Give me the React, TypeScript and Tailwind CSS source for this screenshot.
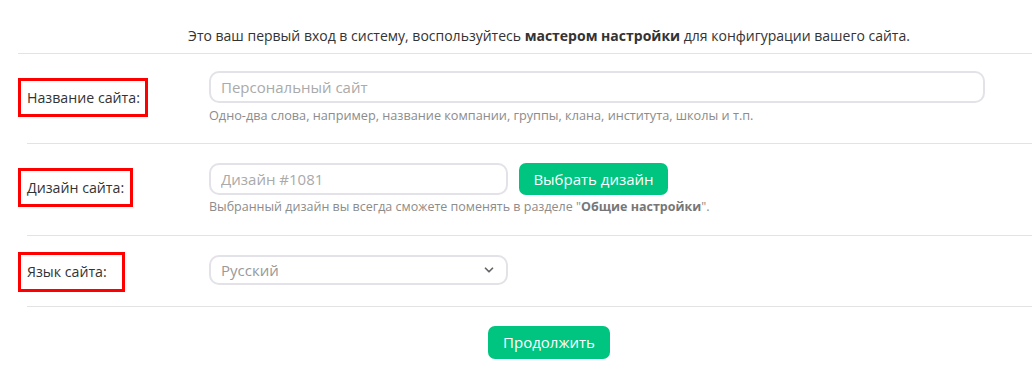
import { ChevronDown } from 'lucide-react';

export default function App() {
  return (
    <div className="w-[1032px] h-[375px] overflow-hidden bg-white font-['Open_Sans',sans-serif] text-[#333]">
      <div className="ml-[18px] w-[1062px]">
        {/* intro */}
        <div className="h-[53px] pt-[26px] text-center text-[14px] leading-5">
          Это ваш первый вход в систему, воспользуйтесь <b className="font-bold">мастером настройки</b> для конфигурации вашего сайта.
        </div>
        <div className="h-px bg-[#e3e3e6]" />

        {/* site name */}
        <div className="h-[89px] flex">
          <div className="w-[191px] pt-[24px]">
            <span className="block w-[130px] border-[3px] border-[#ff0000] pl-[6px] h-[39px] leading-[33px] text-[14.2px] whitespace-nowrap">
              Название сайта:
            </span>
          </div>
          <div className="pt-[17px]">
            <input
              placeholder="Персональный сайт"
              className="w-[776px] h-[32px] border-2 border-[#e2e2e8] rounded-[10px] px-[10px] text-[15px] outline-none placeholder:text-[#aaa]"
            />
            <div className="mt-[4px] text-[12.7px] leading-4 text-[#8c8c8c]">
              Одно-два слова, например, название компании, группы, клана, института, школы и т.п.
            </div>
          </div>
        </div>
        <div className="ml-[9px] h-px bg-[#e3e3e6]" />

        {/* design */}
        <div className="h-[91px] flex">
          <div className="w-[191px] pt-[24px]">
            <span className="block w-[115px] border-[3px] border-[#ff0000] pl-[6px] h-[39px] leading-[33px] text-[14.2px] whitespace-nowrap">
              Дизайн сайта:
            </span>
          </div>
          <div className="pt-[19px]">
            <div className="flex gap-[11px]">
              <input
                placeholder="Дизайн #1081"
                className="w-[299px] h-[32px] border-2 border-[#e2e2e8] rounded-[10px] px-[10px] text-[15px] outline-none placeholder:text-[#aaa]"
              />
              <button className="w-[149px] h-[32px] rounded-[7px] bg-[#00c580] text-white text-[15px]">
                Выбрать дизайн
              </button>
            </div>
            <div className="mt-[4px] text-[12.5px] leading-4 text-[#8c8c8c]">
              Выбранный дизайн вы всегда сможете поменять в разделе "<b className="font-bold text-[#777]">Общие настройки</b>".
            </div>
          </div>
        </div>
        <div className="ml-[9px] h-px bg-[#e3e3e6]" />

        {/* language */}
        <div className="h-[70px] flex">
          <div className="w-[191px] pt-[16px]">
            <span className="block w-[107px] border-[3px] border-[#ff0000] pl-[6px] h-[40px] leading-[34px] text-[14.2px] whitespace-nowrap">
              Язык сайта:
            </span>
          </div>
          <div className="pt-[19px]">
            <div className="w-[299px] h-[30px] border-2 border-[#e2e2e8] rounded-[10px] pl-[10px] pr-[10px] flex items-center justify-between text-[15px] text-[#999]">
              <span>Русский</span>
              <ChevronDown size={14} strokeWidth={3} className="text-[#666]" />
            </div>
          </div>
        </div>
        <div className="ml-[9px] h-px bg-[#e3e3e6]" />

        {/* continue */}
        <div className="pt-[19px] flex justify-center">
          <button className="w-[122px] h-[33px] rounded-[7px] bg-[#00c580] text-white text-[15px]">
            Продолжить
          </button>
        </div>
      </div>
    </div>
  );
}
